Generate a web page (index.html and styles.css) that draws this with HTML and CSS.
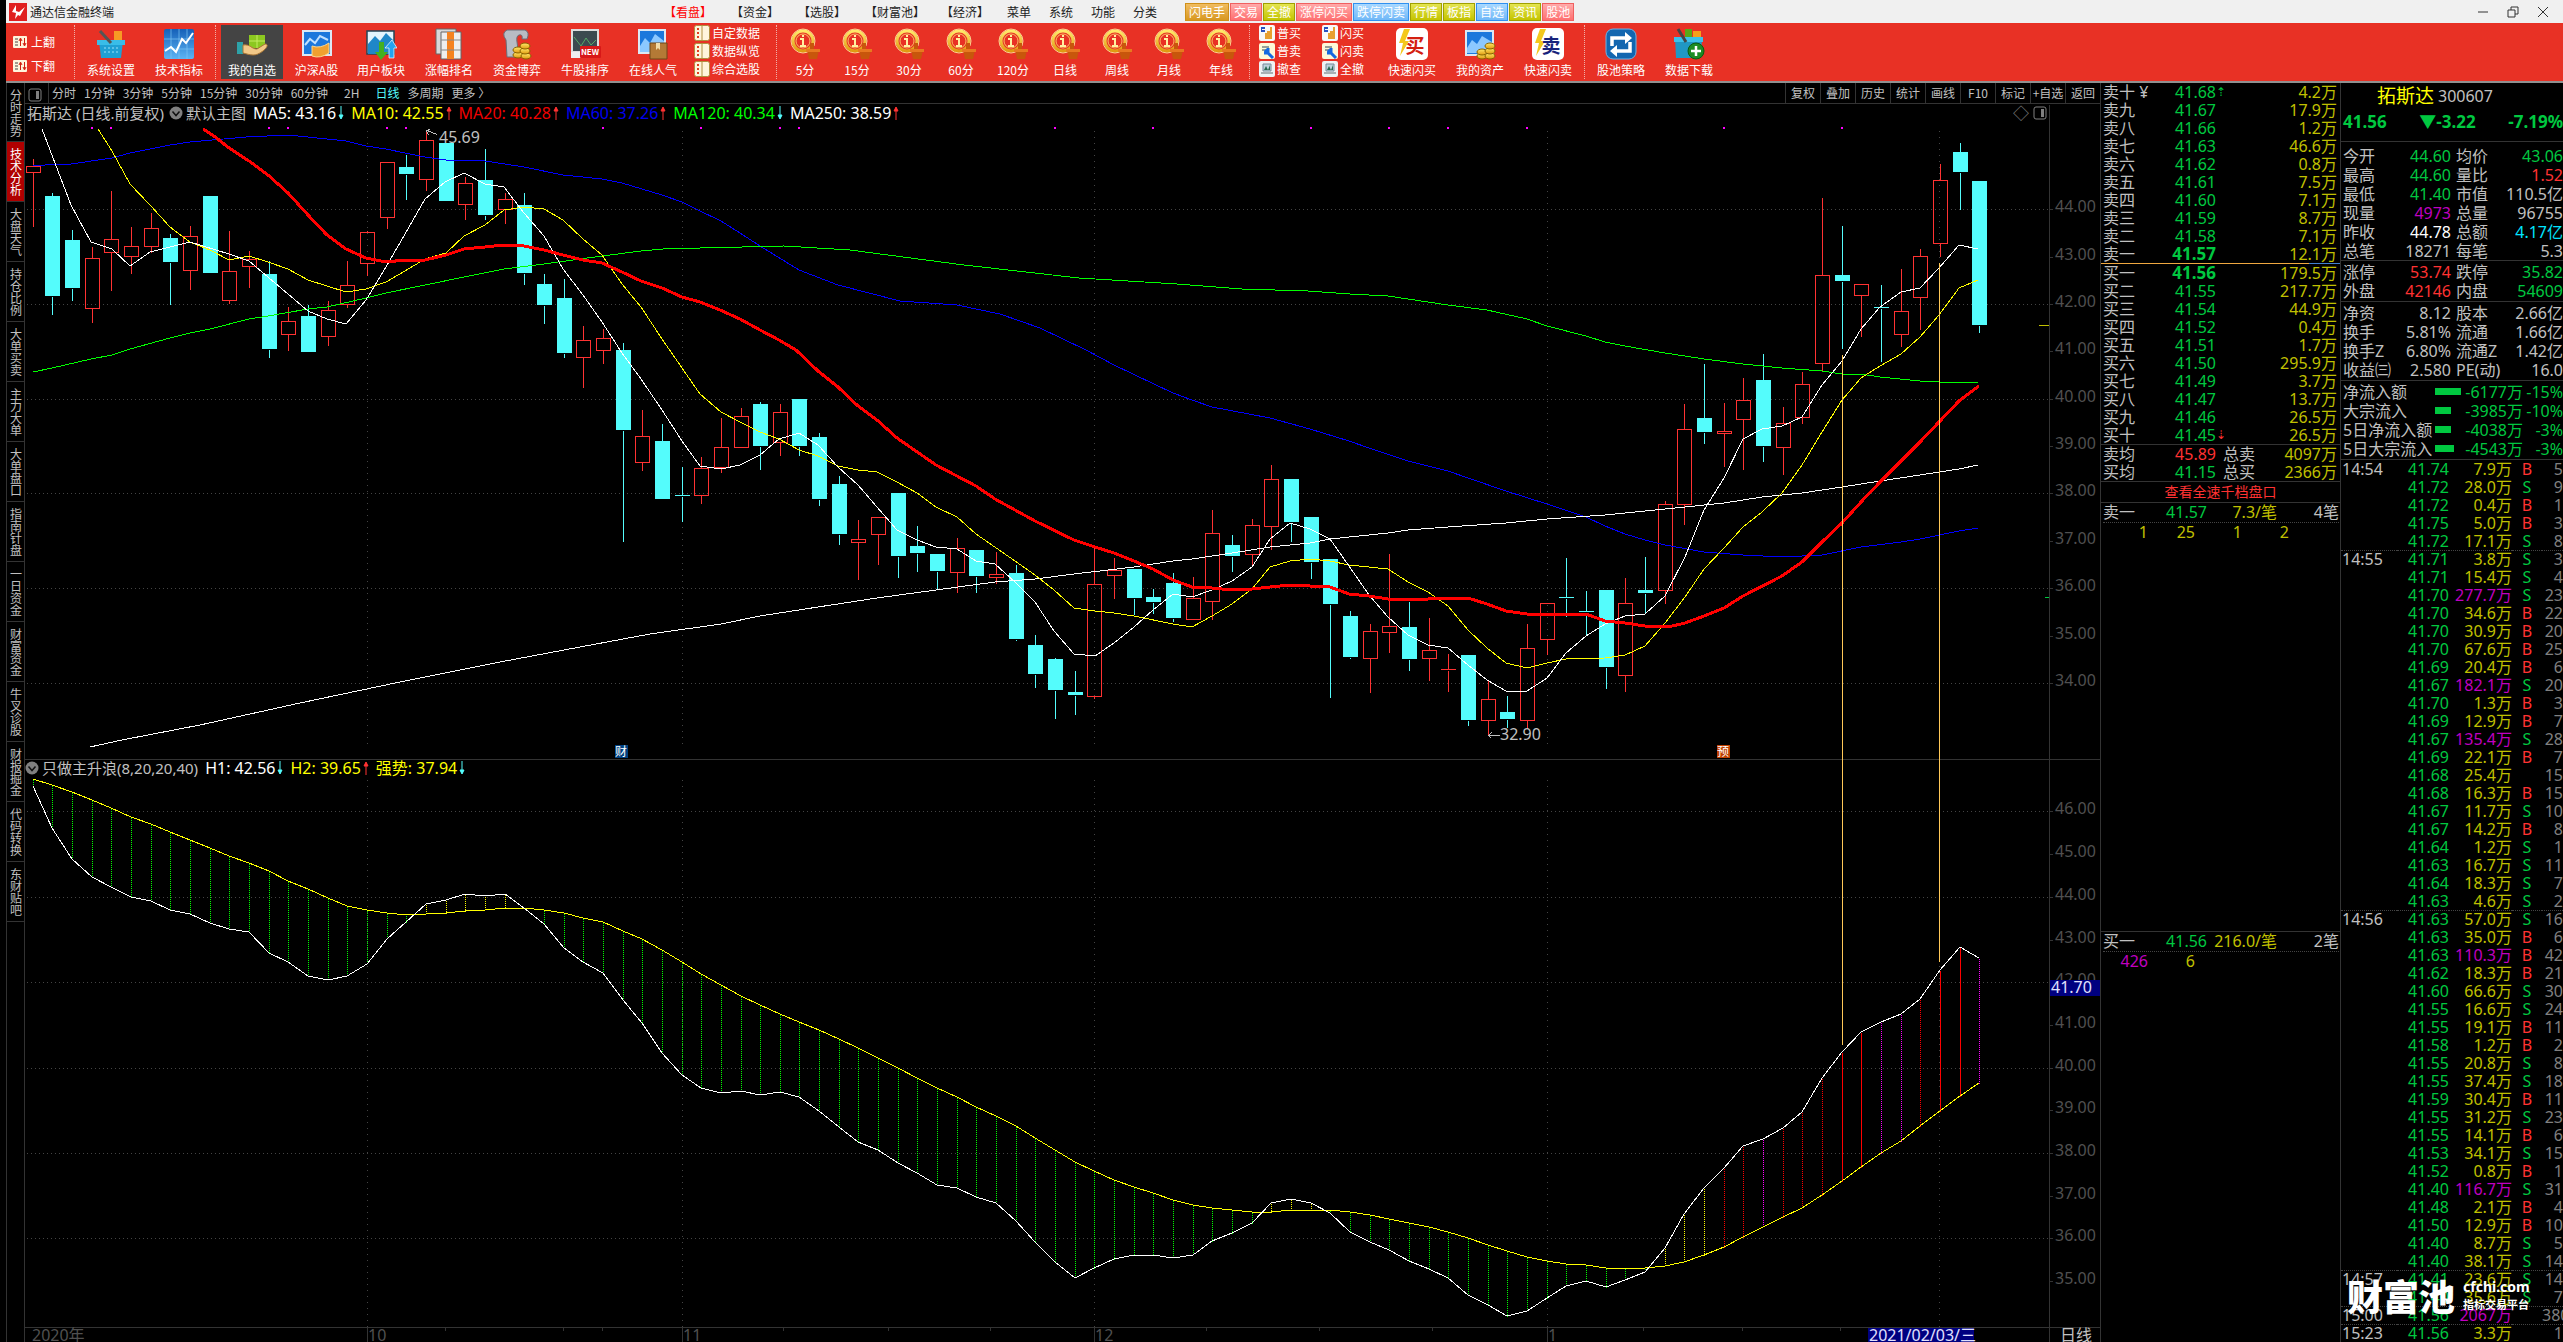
FILE: index.html
```html
<!DOCTYPE html>
<html lang="zh-CN">
<head>
<meta charset="utf-8">
<title>通达信金融终端</title>
<link rel="stylesheet" href="styles.css">
</head>
<body>
<svg class="sprite" aria-hidden="true">
  <linearGradient id="blue" x1="0" y1="0" x2="0" y2="1"><stop offset="0" stop-color="#1560b8"/><stop offset="1" stop-color="#5cb4f4"/></linearGradient>
  <linearGradient id="gold" x1="0" y1="0" x2="0" y2="1"><stop offset="0" stop-color="#ffe96a"/><stop offset="1" stop-color="#e09a10"/></linearGradient>
  <symbol id="i-logo" viewBox="0 0 18 18"><rect width="18" height="18" fill="#e02020"/><path d="M7 2 3 9l4 1-1 6 3-4 2 1 5-9-6 5-3-1z" fill="#fff"/></symbol>
  <symbol id="i-box" viewBox="0 0 32 32"><path d="M4 13h24l-2 17H6z" fill="#1fa0d4"/><path d="M2 12h28v5H2z" fill="#39bde8"/><path d="m5 3 11 12" stroke="#555" stroke-width="3"/><rect x="19" y="3" width="8" height="9" fill="#f79a24"/><path d="M9 20h14M9 24h14" stroke="#9be2fa" stroke-dasharray="2 2"/></symbol>
  <symbol id="i-chart" viewBox="0 0 32 32"><rect x="1" y="1" width="30" height="30" rx="2" fill="url(#blue)"/><path d="M8 1v30M16 1v30M24 1v30M1 11h30M1 21h30" stroke="#7cc4f4" stroke-width=".7"/><path d="m2 23 6-4 5 5 6-13 4 4 7-10" fill="none" stroke="#fff" stroke-width="2"/></symbol>
  <symbol id="i-hand" viewBox="0 0 32 32"><rect x="13" y="7" width="16" height="13" fill="#8cc820"/><path d="M21 7v13M13 13h16" stroke="#c4ec60"/><path d="M1 14h6v12H1z" fill="#2da2a8"/><path d="M7 17c8-1 8 4 14 4l8-5c4 0 2 4-2 7-8 6-12 4-20 2z" fill="#f2c888" stroke="#a87434"/></symbol>
  <symbol id="i-stock" viewBox="0 0 32 32"><rect x="2" y="3" width="28" height="24" fill="#1c78dc" stroke="#dce8f4" stroke-width="2"/><path d="m4 17 5-6 5 4 5-7 8 4" stroke="#bfe0ff" stroke-width="2" fill="none"/><path d="M11 18q8 3 17-3v10q-9 6-17 3z" fill="#f0a030" stroke="#fbd890"/></symbol>
  <symbol id="i-plate" viewBox="0 0 32 32"><rect x="2" y="3" width="27" height="23" fill="#e2f3fc" stroke="#245" stroke-width="1.5"/><path d="m3 16 7-8 5 5 6-8 8 8v13H3z" fill="#1f87c8"/><path d="M14 14h5v10h4l-7 8-6-8h4z" fill="#43b020"/><path d="M24 30V20h-4l7-8 5 8h-3v10z" fill="#24a4f0" stroke="#fff" stroke-width=".7"/></symbol>
  <symbol id="i-rank" viewBox="0 0 32 32"><path d="M3 1h20v25H3z" fill="#d8d8d8" stroke="#666"/><path d="M8 4h20v27H8z" fill="#eee" stroke="#666"/><path d="M14 4h7v27h-7z" fill="#f58220"/><path d="M8 12h20M8 22h20" stroke="#888"/></symbol>
  <symbol id="i-fund" viewBox="0 0 32 32"><path d="M6 2h18q5 2 2 9h-5q1-5-3-4-3 1-2 7l2 15H6l-1-17Q0 5 6 2z" fill="#b8bcc4" stroke="#6a6e78"/><g fill="url(#gold)" stroke="#8a6400"><ellipse cx="17" cy="27" rx="5" ry="3"/><ellipse cx="17" cy="22" rx="5" ry="3"/><ellipse cx="25" cy="28" rx="5" ry="3"/><ellipse cx="24" cy="23" rx="5" ry="3"/><ellipse cx="24" cy="18" rx="5" ry="3"/></g></symbol>
  <symbol id="i-hot" viewBox="0 0 32 32"><rect x="2" y="2" width="26" height="23" fill="#1c78dc" stroke="#dce8f4" stroke-width="2"/><path d="m3 18 5-8 5 5 5-9 9 7v11H3z" fill="#8cc8ff"/><path d="M13 15h17v16H13z" fill="#b47a36" stroke="#6e4617"/><path d="M19 15h4v7l-2-2-2 2z" fill="#f2dca8"/></symbol>
  <symbol id="i-coin" viewBox="0 0 32 32"><circle cx="14" cy="13" r="10" fill="#e83125" stroke="url(#gold)" stroke-width="3"/><circle cx="14" cy="13" r="12" fill="none" stroke="#fff3a8" stroke-width=".8"/><circle cx="14" cy="13" r="7" fill="none" stroke="#ffe070" stroke-width=".8"/><path d="M11 11h3v7M11 18h6" stroke="#fff0a0" stroke-width="2" fill="none"/><path d="M13 7h2v2h-2z" fill="#fff0a0"/><path d="M21 15h4v7h5l-2 9h-8l-2-9h3z" fill="#c8560c"/><path d="M17 21h14v3H17z" fill="#e87820"/></symbol>
  <symbol id="i-asset" viewBox="0 0 32 32"><rect x="2" y="3" width="27" height="24" fill="#1c78dc" stroke="#dce8f4" stroke-width="2"/><path d="m3 20 5-8 5 4 5-8 10 6v11H3z" fill="#8cc8ff"/><g fill="url(#gold)" stroke="#8a6400"><ellipse cx="18" cy="28" rx="5" ry="3"/><ellipse cx="18" cy="24" rx="5" ry="3"/><ellipse cx="26" cy="28" rx="5" ry="3"/><ellipse cx="26" cy="23" rx="5" ry="3"/><ellipse cx="26" cy="18" rx="5" ry="3"/></g></symbol>
  <symbol id="i-loop" viewBox="0 0 32 32"><rect x="1" y="1" width="30" height="30" rx="7" fill="#1266b0" stroke="#6ab4e8"/><path d="M7 18v-8h14M25 14v9H11" fill="none" stroke="#fff" stroke-width="3.500"/><path d="m20 4 7 6-7 6zM12 17l-7 6 7 6z" fill="#fff"/></symbol>
  <symbol id="i-down" viewBox="0 0 32 32"><rect x="12" y="1" width="7" height="9" fill="#58a818"/><rect x="20" y="3" width="8" height="8" fill="#f5a01c"/><path d="M2 10h27l-1 20H3z" fill="#2097c4"/><path d="M1 9h29v5H1z" fill="#3cc0ea"/><path d="m5 1 8 13" stroke="#444" stroke-width="3"/><circle cx="23" cy="23" r="8" fill="#1c8c24" stroke="#0a5c12"/><path d="M23 18v10M18 23h10" stroke="#fff" stroke-width="2.500"/></symbol>
  <symbol id="i-list" viewBox="0 0 16 16"><rect x=".5" y=".5" width="15" height="15" rx="2" fill="#fff5dc" stroke="#b09040"/><path d="M8 1v14" stroke="#b09040"/><path d="M3 3h2v2H3zM3 7h2v2H3zM3 11h2v2H3z" fill="#e04020"/></symbol>
  <symbol id="i-thumb" viewBox="0 0 16 16"><rect width="16" height="16" rx="2" fill="#f8f8f8"/><path d="M2 2h4v2H3v1h3v2H2z" fill="#2850c0"/><path d="M6 14V8h2V6h3V2h2v12z" fill="#e8a030"/></symbol>
  <symbol id="i-tool" viewBox="0 0 16 16"><rect width="16" height="16" rx="2" fill="#fdf8d8"/><path d="M3 4h7M3 7h5" stroke="#345"/><path d="m6 7 8 8M9 5v5H5" stroke="#1468e0" stroke-width="3" fill="none"/></symbol>
  <symbol id="i-pc" viewBox="0 0 16 16"><rect width="16" height="16" rx="2" fill="#eef2f4"/><path d="M4 3h8v7H4z" fill="#bcd4dc" stroke="#789"/><path d="m5 9 2-4 2 4 2-5v5z" fill="#286850"/><path d="M2 11h12v2H2z" fill="#a8b0b4"/></symbol>
  <symbol id="i-page" viewBox="0 0 14 12"><rect width="14" height="12" rx="1" fill="#fff5dc"/><path d="M2 3h3M2 6h3M2 9h3" stroke="#444"/><path d="M7.500 10V3M6 5l1.500-3L9 5M11.500 2v7M10 7l1.500 3L13 7" stroke="#d02010" fill="none"/></symbol>
  <symbol id="i-panel" viewBox="0 0 14 14"><rect x="1" y="1" width="12" height="12" rx="2" fill="none" stroke="#808080"/><path d="M8 3h3v8H8z" fill="#808080"/></symbol>
  <symbol id="i-fold" viewBox="0 0 14 14"><circle cx="7" cy="7" r="6.500" fill="#808080"/><path d="m3.500 5.500 3.500 4 3.500-4" fill="none" stroke="#111" stroke-width="1.500"/></symbol>
  <symbol id="i-up" viewBox="0 0 6 14"><path d="M3 14V2M1 5l2-4 2 4z" stroke="#ff3232" fill="#ff3232"/></symbol>
  <symbol id="i-dn" viewBox="0 0 6 14"><path d="M3 0v12M1 9l2 4 2-4z" stroke="#54fcfc" fill="#54fcfc"/></symbol>
</svg>

<header class="titlebar">
  <svg class="logo"><use href="#i-logo"/></svg>
  <h1 class="app-name">通达信金融终端</h1>
  <nav class="menu">
    <a class="menu-main is-on" href="#">【看盘】</a><a class="menu-main" href="#">【资金】</a><a class="menu-main" href="#">【选股】</a><a class="menu-main menu-wide" href="#">【财富池】</a><a class="menu-main menu-last" href="#">【经济】</a>
    <a class="menu-sub" href="#">菜单</a><a class="menu-sub" href="#">系统</a><a class="menu-sub" href="#">功能</a><a class="menu-sub" href="#">分类</a>
  </nav>
  <div class="quick">
    <button class="q-orange">闪电手</button><button class="q-pink">交易</button><button class="q-olive">全撤</button><button class="q-pink">涨停闪买</button><button class="q-blue">跌停闪卖</button><button class="q-olive">行情</button><button class="q-olive">板指</button><button class="q-blue">自选</button><button class="q-olive">资讯</button><button class="q-pink">股池</button>
  </div>
  <div class="window-controls">
    <button aria-label="最小化"><svg viewBox="0 0 12 12"><path d="M1 6h10"/></svg></button>
    <button aria-label="还原"><svg viewBox="0 0 12 12"><path d="M1 4h7v7H1zM4 4V1h7v7H8"/></svg></button>
    <button aria-label="关闭"><svg viewBox="0 0 12 12"><path d="m1 1 10 10M11 1 1 11"/></svg></button>
  </div>
</header>

<div class="toolbar">
  <div class="pager"><button><svg><use href="#i-page"/></svg>上翻</button><button><svg><use href="#i-page"/></svg>下翻</button></div>
  <div class="tool-group">
    <button class="tool"><svg><use href="#i-box"/></svg>系统设置</button>
    <button class="tool"><svg><use href="#i-chart"/></svg>技术指标</button>
  </div>
  <div class="tool-group">
    <button class="tool is-on"><svg><use href="#i-hand"/></svg>我的自选</button>
    <button class="tool tool-narrow"><svg><use href="#i-stock"/></svg>沪深A股</button>
    <button class="tool"><svg><use href="#i-plate"/></svg>用户板块</button>
    <button class="tool"><svg><use href="#i-rank"/></svg>涨幅排名</button>
    <button class="tool"><svg><use href="#i-fund"/></svg>资金博弈</button>
    <button class="tool"><svg viewBox="0 0 32 32"><rect x="3" y="2" width="26" height="22" fill="#3c4a50" stroke="#ddd" stroke-width="2"/><path d="m5 9 7 9 5-8 5 7 5-5" stroke="#56a868" fill="none"/><path d="M2 24h12v6H2z" fill="#eee"/><rect x="11" y="18" width="21" height="12" rx="1" fill="#d81818"/><text x="21" y="27" text-anchor="middle" font-size="8" font-weight="700" fill="#fff">NEW</text></svg>牛股排序</button>
    <button class="tool"><svg><use href="#i-hot"/></svg>在线人气</button>
    <div class="mini mini-wide">
      <button><svg><use href="#i-list"/></svg>自定数据</button><button><svg><use href="#i-list"/></svg>数据纵览</button><button><svg><use href="#i-list"/></svg>综合选股</button>
    </div>
  </div>
  <div class="tool-group">
    <button class="tool tool-period"><svg><use href="#i-coin"/></svg>5分</button>
    <button class="tool tool-period"><svg><use href="#i-coin"/></svg>15分</button>
    <button class="tool tool-period"><svg><use href="#i-coin"/></svg>30分</button>
    <button class="tool tool-period"><svg><use href="#i-coin"/></svg>60分</button>
    <button class="tool tool-period"><svg><use href="#i-coin"/></svg>120分</button>
    <button class="tool tool-period"><svg><use href="#i-coin"/></svg>日线</button>
    <button class="tool tool-period"><svg><use href="#i-coin"/></svg>周线</button>
    <button class="tool tool-period"><svg><use href="#i-coin"/></svg>月线</button>
    <button class="tool tool-period"><svg><use href="#i-coin"/></svg>年线</button>
  </div>
  <div class="tool-group">
    <div class="mini"><button><svg><use href="#i-thumb"/></svg>普买</button><button><svg><use href="#i-tool"/></svg>普卖</button><button><svg><use href="#i-pc"/></svg>撤查</button></div>
    <div class="mini"><button><svg><use href="#i-thumb"/></svg>闪买</button><button><svg><use href="#i-tool"/></svg>闪卖</button><button><svg><use href="#i-pc"/></svg>全撤</button></div>
    <button class="tool"><svg viewBox="0 0 32 32"><rect width="32" height="32" rx="5" fill="#fff"/><path d="M8 1 3 15h4L4 28l9-15H9l5-12z" fill="#f4c81c"/><text x="19" y="25" text-anchor="middle" font-size="19" font-weight="700" fill="#d42010">买</text></svg>快速闪买</button>
    <button class="tool"><svg><use href="#i-asset"/></svg>我的资产</button>
    <button class="tool"><svg viewBox="0 0 32 32"><rect width="32" height="32" rx="5" fill="#fff"/><path d="M8 1 3 15h4L4 28l9-15H9l5-12z" fill="#f4c81c"/><text x="19" y="25" text-anchor="middle" font-size="19" font-weight="700" fill="#18247c">卖</text></svg>快速闪卖</button>
  </div>
  <div class="tool-group">
    <button class="tool"><svg><use href="#i-loop"/></svg>股池策略</button>
    <button class="tool"><svg><use href="#i-down"/></svg>数据下载</button>
  </div>
</div>

<main class="workspace">
  <nav class="side">
    <a href="#">分时走势</a><a href="#" class="is-on">技术分析</a><a href="#">大盘天气</a><a href="#">持仓比例</a><a href="#">大单买卖</a><a href="#">主力大单</a><a href="#">大单盘口</a><a href="#">指南针盘</a><a href="#">一日资金</a><a href="#">财富资金</a><a href="#">牛叉诊股</a><a href="#">财报掘金</a><a href="#">代码转换</a><a href="#">东财贴吧</a>
  </nav>

  <section class="charts">
    <div class="tabs">
      <button class="tab-panel" aria-label="面板"><svg><use href="#i-panel"/></svg></button>
      <div class="periods">
        <button>分时</button><button>1分钟</button><button>3分钟</button><button>5分钟</button><button>15分钟</button><button>30分钟</button><button>60分钟</button><button class="period-wide">2H</button><button class="is-on">日线</button><button>多周期</button><button>更多 〉</button>
      </div>
      <div class="actions">
        <button>复权</button><button>叠加</button><button>历史</button><button>统计</button><button>画线</button><button>F10</button><button>标记</button><button>+自选</button><button>返回</button>
      </div>
    </div>
    <div class="canvas">
      <div class="pane pane-main">
        <div class="legend">
          <span class="legend-name">拓斯达 (日线.前复权)</span><svg class="fold"><use href="#i-fold"/></svg><span class="legend-name">默认主图</span>
          <span class="ma c-white">MA5: 43.16<svg><use href="#i-dn"/></svg></span><span class="ma c-bright">MA10: 42.55<svg><use href="#i-up"/></svg></span><span class="ma c-ma20">MA20: 40.28<svg><use href="#i-up"/></svg></span><span class="ma c-ma60">MA60: 37.26<svg><use href="#i-up"/></svg></span><span class="ma c-ma120">MA120: 40.34<svg><use href="#i-dn"/></svg></span><span class="ma c-white">MA250: 38.59<svg><use href="#i-up"/></svg></span>
        </div>
        <div class="pane-tools"><span>◇</span><svg><use href="#i-panel"/></svg></div>
      </div>
      <div class="pane pane-sub">
        <div class="legend legend-sub">
          <svg class="fold"><use href="#i-fold"/></svg><span class="legend-name">只做主升浪(8,20,20,40)</span>
          <span class="ma c-white">H1: 42.56<svg><use href="#i-dn"/></svg></span><span class="ma c-bright">H2: 39.65<svg><use href="#i-up"/></svg></span><span class="ma c-bright">强势: 37.94<svg><use href="#i-dn"/></svg></span>
        </div>
      </div>
      <div class="date-row"></div>
      <svg class="plot" id="plot" role="img" aria-label="拓斯达日线"></svg>
    </div>
  </section>

  <section class="book">
    <table class="levels" id="asks"></table>
    <div class="ratio"></div>
    <table class="levels" id="bids"></table>
    <table class="averages">
      <tr><th>卖均</th><td class="c-red num">45.89</td><th>总卖</th><td class="c-vol">4097万</td></tr>
      <tr><th>买均</th><td class="c-green num">41.15</td><th>总买</th><td class="c-vol">2366万</td></tr>
    </table>
    <a class="full-depth" href="#">查看全速千档盘口</a>
    <div class="queue queue-sell">
      <div class="queue-head"><span>卖一</span><span class="c-green">41.57</span><span class="c-vol">7.3/笔</span><span>4笔</span></div>
      <div class="queue-items c-vol"><span>1</span><span>25</span><span>1</span><span>2</span></div>
    </div>
    <div class="queue queue-buy">
      <div class="queue-head"><span>买一</span><span class="c-green">41.56</span><span class="c-vol">216.0/笔</span><span>2笔</span></div>
      <div class="queue-items c-vol"><span class="c-big">426</span><span>6</span></div>
    </div>
  </section>

  <section class="quote">
    <div class="quote-head">
      <div class="quote-name"><h2>拓斯达</h2><span>300607</span></div>
      <div class="quote-price"><span>41.56</span><span>▼-3.22</span><span>-7.19%</span></div>
    </div>
    <table class="stats stats-day">
      <tr><th>今开</th><td class="c-green">44.60</td><th>均价</th><td class="c-green">43.06</td></tr>
      <tr><th>最高</th><td class="c-green">44.60</td><th>量比</th><td class="c-red">1.52</td></tr>
      <tr><th>最低</th><td class="c-green">41.40</td><th>市值</th><td>110.5亿</td></tr>
      <tr><th>现量</th><td class="c-big">4973</td><th>总量</th><td>96755</td></tr>
      <tr><th>昨收</th><td class="c-white">44.78</td><th>总额</th><td class="c-cyan">4.17亿</td></tr>
      <tr><th>总笔</th><td>18271</td><th>每笔</th><td>5.3</td></tr>
    </table>
    <table class="stats">
      <tr><th>涨停</th><td class="c-red">53.74</td><th>跌停</th><td class="c-green">35.82</td></tr>
      <tr><th>外盘</th><td class="c-red">42146</td><th>内盘</th><td class="c-green">54609</td></tr>
    </table>
    <table class="stats">
      <tr><th>净资</th><td>8.12</td><th>股本</th><td>2.66亿</td></tr>
      <tr><th>换手</th><td>5.81%</td><th>流通</th><td>1.66亿</td></tr>
      <tr><th>换手Z</th><td>6.80%</td><th>流通Z</th><td>1.42亿</td></tr>
      <tr><th>收益㈢</th><td>2.580</td><th>PE(动)</th><td>16.0</td></tr>
    </table>
    <table class="flows">
      <tr><th>净流入额</th><td><i style="width:26px"></i></td><td>-6177万</td><td>-15%</td></tr>
      <tr><th>大宗流入</th><td><i style="width:16px"></i></td><td>-3985万</td><td>-10%</td></tr>
      <tr><th>5日净流入额</th><td><i style="width:16px"></i></td><td>-4038万</td><td>-3%</td></tr>
      <tr><th>5日大宗流入</th><td><i style="width:19px"></i></td><td>-4543万</td><td>-3%</td></tr>
    </table>
    <table class="ticks" id="ticks"></table>
    <div class="brand"><strong>财富池</strong><div><b>cfchi.com</b><em>指标交易平台</em></div></div>
  </section>
</main>
<script src="chart.js"></script>
</body>
</html>
```
FILE: styles.css
```css
* { box-sizing: border-box; }
html, body { margin: 0; height: 100%; }
body {
  display: flex;
  flex-direction: column;
  height: 100vh;
  padding-left: 6px;
  overflow: hidden;
  background: #000;
  color: #c0c0c0;
  font: 16px/18px "Noto Sans", "Noto Sans CJK SC", sans-serif;
}
button { margin: 0; padding: 0; border: 0; background: none; color: inherit; font: inherit; white-space: nowrap; cursor: pointer; }
a { color: inherit; text-decoration: none; }
table { border-collapse: separate; border-spacing: 0; table-layout: fixed; width: 100%; }
th, td { padding: 0; font-weight: 400; text-align: right; white-space: nowrap; }
th { text-align: left; }
h1, h2 { margin: 0; font-weight: 400; }
.sprite { position: absolute; width: 0; height: 0; }

.c-green { color: #00c840; }
.c-red { color: #ff3232; }
.c-vol { color: #c0c000; }
.c-big { color: #c000c0; }
.c-white { color: #fff; }
.c-cyan { color: #00e4ff; }
.c-bright { color: #ff0; }
.c-ma20 { color: #f00000; }
.c-ma60 { color: #0000f0; }
.c-ma120 { color: #0f0; }

/* title bar */
.titlebar {
  flex: none;
  display: flex;
  align-items: center;
  height: 23px;
  padding: 0 14px 0 3px;
  background: #f0f0f0;
  color: #222;
  font: 12px/16px "Noto Sans CJK SC", sans-serif;
}
.logo { width: 18px; height: 18px; }
.app-name { width: 637px; padding-left: 3px; font-size: 12px; line-height: 16px; }
.menu { display: flex; width: 521px; }
.menu-main { width: 67px; white-space: nowrap; }
.menu-wide { width: 76px; }
.menu-last { width: 57px; }
.menu-main.is-on { color: #f00; }
.menu-sub { width: 42px; text-align: center; }
.quick { display: flex; gap: 1px; flex: 1; }
.quick button { height: 18px; padding: 0 3px; border: 1px solid; color: #fff; line-height: 16px; }
.quick .q-orange { border-color: #d09018; background: linear-gradient(#f0bc60, #d89820); }
.quick .q-pink { border-color: #f06060; background: linear-gradient(#ffaaaa, #ff7070); }
.quick .q-olive { border-color: #a0a000; background: linear-gradient(#e4e450, #c4c400); }
.quick .q-blue { border-color: #3090f0; background: linear-gradient(#a8d8ff, #70b8f8); }
.window-controls { display: flex; gap: 18px; }
.window-controls svg { display: block; width: 12px; height: 12px; fill: none; stroke: #333; }

/* toolbar */
.toolbar {
  flex: none;
  display: flex;
  height: 60px;
  padding-top: 2px;
  border-bottom: 2px solid #909090;
  background: #e83125;
  color: #fff;
  font: 12px/16px "Noto Sans CJK SC", sans-serif;
}
.pager { display: flex; flex-direction: column; gap: 8px; width: 68px; padding: 9px 0 0 7px; }
.pager button { display: flex; align-items: center; gap: 4px; }
.pager svg { width: 14px; height: 12px; }
.tool-group { display: flex; height: 54px; padding: 0 2px; border-left: 1px dotted #f0b0a8; }
.tool { display: flex; flex-direction: column; align-items: center; gap: 2px; width: 62px; margin: 0 3px; padding-top: 3px; }
.tool.is-on { background: #444; }
.tool svg { width: 32px; height: 32px; }
.tool-narrow { width: 55px; }
.tool-period { width: 52px; margin: 0; }
.mini { display: flex; flex-direction: column; gap: 2px; width: 63px; padding-left: 7px; }
.mini-wide { width: 87px; }
.mini button { display: flex; align-items: center; gap: 2px; }
.mini svg { width: 16px; height: 16px; }

.workspace { flex: 1; min-height: 0; display: flex; }

/* left strip of views */
.side { flex: none; width: 19px; border: solid #333; border-width: 0 1px; font: 12px/12px "Noto Sans CJK SC", sans-serif; }
.side a { display: block; height: 60px; padding: 6px 2px 0 3px; border-bottom: 1px solid #333; word-break: break-all; }
.side a:first-child { height: 59px; }
.side .is-on { background: #b00000; color: #fff; }

/* charts */
.charts { flex: 1; min-width: 0; display: flex; flex-direction: column; }
.tabs { flex: none; display: flex; height: 21px; border-bottom: 1px solid #333; font: 12px/20px "Noto Sans CJK SC", sans-serif; }
.tab-panel { width: 24px; padding: 3px 0 0 3px; border-right: 1px solid #333; }
.tab-panel svg { display: block; width: 14px; height: 14px; }
.periods { display: flex; flex: 1; gap: 8px; padding-left: 3px; }
.period-wide { padding: 0 8px; }
.periods .is-on { color: #54fcfc; }
.actions { display: flex; }
.actions button { width: 35px; border-left: 1px solid #333; }
.canvas { position: relative; flex: 1; display: flex; flex-direction: column; }
.pane { display: flex; justify-content: space-between; border-bottom: 1px solid #333; }
.pane-main { flex: 656; }
.pane-sub { flex: 568; }
.date-row { flex: none; height: 14px; }
.legend { display: flex; align-items: center; height: 18px; padding-left: 2px; }
.legend-name { font-size: 15px; white-space: nowrap; }
.fold { width: 14px; height: 14px; margin: 0 3px 0 5px; }
.legend-sub { height: 16px; }
.legend-sub .fold { margin-left: -2px; }
.ma { display: flex; align-items: center; margin-left: 7px; white-space: nowrap; }
.ma svg { width: 6px; height: 14px; margin-left: 2px; }
.pane-tools { display: flex; align-items: center; gap: 4px; height: 18px; padding-right: 53px; color: #808080; }
.pane-tools svg { width: 14px; height: 14px; }
.plot { position: absolute; inset: 0; width: 100%; height: 100%; pointer-events: none; }
.plot text { font-size: 16px; }
.plot .axis { fill: #505050; }
.plot .badge { font-size: 12px; fill: #fff; }
.plot .tip { fill: #c0c0c0; }
.plot .hot { fill: #e0e0ff; }

/* order book */
.book { flex: none; display: flex; flex-direction: column; width: 240px; border-left: 1px solid #333; }
.levels tr, .averages tr { height: 18px; }
.levels th:first-child { width: 64px; padding-left: 2px; }
.levels .price { width: 51px; }
.levels .best { font-size: 17px; font-weight: 700; }
.levels .mark { width: 8px; font-size: 12px; text-align: left; }
.levels td:last-child { padding-right: 3px; }
.ratio { flex: none; height: 1px; background: linear-gradient(90deg, #f0a840 87%, #4080d0 87%); }
.averages { border-top: 1px solid #333; }
.averages th { padding-left: 7px; }
.averages th:first-child { width: 64px; padding-left: 2px; }
.averages .num { width: 51px; }
.averages td:last-child { padding-right: 3px; }
.full-depth { display: block; border-top: 1px solid #333; color: #ff3232; font-size: 14px; line-height: 20px; text-align: center; }
.queue { border-top: 1px solid #333; }
.queue-sell { flex: 429; }
.queue-buy { flex: 410; }
.queue-head { display: grid; grid-template-columns: 50px 54px 70px 1fr; height: 20px; margin: 0 1px 0 2px; border-bottom: 1px dotted #444; text-align: right; }
.queue-head span:first-child { text-align: left; }
.queue-items { display: grid; grid-template-columns: repeat(4, 47px); text-align: right; }

/* quote panel */
.quote { flex: none; position: relative; display: flex; flex-direction: column; width: 223px; border-left: 1px solid #333; overflow: hidden; }
.quote-head { height: 61px; }
.quote-name { display: flex; gap: 4px; padding-left: 36px; line-height: 26px; }
.quote-name h2 { color: #ff0; font-size: 19px; line-height: 26px; }
.quote-price { display: flex; justify-content: space-between; padding-left: 2px; color: #00c840; font-size: 17px; font-weight: 700; line-height: 26px; }
.stats tr, .flows tr { height: 19px; }
.stats, .flows { padding: 1px 0; border-top: 1px solid #333; }
.stats-day { padding: 4px 0 0; }
.stats th:nth-child(1) { width: 54px; padding-left: 2px; }
.stats td:nth-child(2) { width: 56px; }
.stats th:nth-child(3) { padding-left: 5px; width: 53px; }
.flows { color: #00c840; }
.flows th { width: 94px; padding-left: 2px; color: #c0c0c0; }
.flows td:nth-child(2) { width: 26px; text-align: left; }
.flows td:nth-child(3) { width: 62px; }
.flows i { display: block; height: 7px; background: #00c840; }
.ticks { border-top: 1px solid #333; }
.ticks tr { height: 18px; }
.ticks .minute > * { border-top: 1px dotted #444; line-height: 17px; }
.ticks th { width: 56px; padding-left: 1px; }
.ticks .price { width: 52px; }
.ticks .volume { width: 63px; }
.ticks .side-cell { width: 30px; text-align: center; }
.ticks .count { color: #808080; }
.brand { position: absolute; bottom: 28px; left: 6px; display: flex; align-items: center; gap: 8px; color: #fff; }
.brand strong { font: 900 36px/38px "Noto Sans CJK SC", sans-serif; }
.brand div { display: flex; flex-direction: column; }
.brand b { font-size: 14px; line-height: 18px; }
.brand em { font: 700 11px/16px "Noto Sans CJK SC", sans-serif; }
```
FILE: chart.js
```js
// Chart data is kept in design units; draw() scales it to the canvas size.
const ORIGIN = { x: 25, y: 104 };
const SIZE = { w: 2075, h: 1238 };
const STEP = 19.664;
const FIRST = 32.6;

// r = rising (hollow), c = falling (solid): high, body top, body bottom, low
const candles = `r158,166,172,226 c192,196,296,314 c229,240,288,300 r246,258,308,322 r190,239,252,290 r226,246,256,273 r212,228,246,252 c233,238,262,304 r225,236,270,289 c196,196,273,273
r230,271,300,303 r250,259,266,287 c260,274,349,357 r306,321,334,350 c304,316,352,352 r300,310,336,345 r260,285,304,307 r230,232,263,275 r162,162,217,228 c154,167,174,199
r130,140,179,190 c143,143,201,201 r176,183,204,219 c148,180,215,219 r192,199,209,223 c192,205,273,284 c273,284,305,323 c278,298,353,357 r325,340,357,387 r328,338,350,363
c342,350,430,541 r409,436,462,470 c423,441,499,499 c466,495,496,521 r456,468,495,503 r417,447,467,472 r407,416,447,447 c401,404,446,469 r403,412,442,455 c398,399,446,455
c432,437,499,505 c475,484,534,544 r519,539,542,579 r517,517,534,564 c493,493,556,577 c525,546,553,571 c553,554,571,588 r537,548,572,592 c550,550,576,592 r551,574,577,583
c564,573,639,640 c634,645,674,687 c657,659,690,718 c670,692,695,714 r547,584,696,698 r557,570,575,598 c569,569,598,614 c588,597,602,613 c572,583,618,621 r576,598,619,619
r509,533,601,619 c534,545,556,571 r518,525,554,564 r464,479,526,549 c479,479,522,541 c517,517,562,578 c559,559,604,697 c610,616,657,658 r623,631,658,692 r553,626,632,652
c601,627,659,670 r617,650,658,680 r653,669,670,691 c655,655,720,725 r680,699,720,734 c695,712,719,727 r623,648,720,728 r603,603,639,654 c557,597,598,616 c590,611,612,635
c590,590,667,688 r577,603,675,691 c556,590,593,613 r500,504,590,603 r403,429,504,524 c363,418,432,443 r402,431,433,466 r377,400,419,469 c353,380,446,461 r406,423,447,474
r371,384,417,423 r197,275,363,371 c225,275,281,348 r283,284,295,336 c284,307,308,361 r268,311,334,346 r248,256,297,329 r163,180,243,256 c142,152,172,209 c181,181,325,332`
  .split(/\s+/).map(s => [s[0], ...s.slice(1).split(',').map(Number)]);

const averages = [
  ['#0000ff', 1, '33,166 45,165 71,164 112,158 130,153 170,145 190,142 246,137 288,135 327,139 346,141 366,146 386,149 405,153 425,157 446,160 464,160 485,161 524,167 563,175 602,179 622,183 662,195 682,202 700,211 721,221 740,233 760,246 799,270 838,285 900,301 957,305 1000,314 1040,328 1086,350 1114,365 1173,393 1192,400 1212,407 1270,418 1310,429 1349,441 1369,448 1408,461 1448,471 1468,478 1506,491 1547,504 1586,517 1605,526 1625,534 1645,540 1665,545 1704,552 1743,555 1782,557 1802,556 1822,555 1861,547 1901,542 1920,539 1959,531 1978,528'],
  ['#00ff00', 1, '33,372 52,368 91,359 112,355 130,349 170,338 190,333 210,329 249,319 268,316 308,309 327,307 366,298 386,293 425,285 464,277 504,269 544,264 602,256 641,251 674,248 700,248 784,246 850,250 964,265 1079,278 1177,284 1242,289 1308,291 1350,294 1388,296 1408,299 1448,305 1487,310 1527,319 1547,326 1586,336 1605,342 1625,346 1665,353 1704,359 1743,364 1782,368 1822,371 1842,374 1861,374 1880,377 1920,381 1939,382 1959,382 1978,383'],
  ['#ffffff', 1, '90,747 122,740 200,725 300,703 400,682 500,662 580,647 650,634 721,624 760,616 818,607 877,598 936,590 995,582 1035,579 1074,574 1134,567 1173,561 1192,559 1232,553 1270,547 1310,543 1330,539 1388,533 1408,530 1448,527 1506,523 1547,519 1605,515 1645,511 1685,507 1724,503 1762,497 1802,493 1842,487 1880,481 1920,475 1939,472 1959,469 1978,465'],
  ['#ffff00', 1, '98,129 112,151 130,184 150,205 170,227 190,242 210,250 229,260 249,256 268,262 288,269 308,280 327,286 346,292 366,289 386,282 405,271 425,259 446,253 464,236 485,225 504,210 524,207 544,209 563,220 583,239 602,255 622,284 641,307 662,339 682,368 700,394 721,412 740,422 760,432 779,439 799,450 818,456 838,466 858,470 877,472 897,482 917,493 936,507 957,517 976,534 1015,561 1035,575 1054,590 1074,608 1095,611 1114,613 1134,616 1173,624 1192,627 1212,616 1232,604 1252,589 1270,567 1290,561 1310,559 1330,561 1349,565 1388,569 1408,582 1428,592 1448,606 1468,630 1487,648 1506,663 1527,668 1547,663 1566,659 1605,658 1625,655 1645,646 1665,623 1685,597 1704,569 1724,548 1743,527 1762,512 1782,493 1802,465 1822,432 1842,400 1861,378 1880,366 1901,354 1920,337 1939,315 1959,288 1978,280'],
  ['#ffffff', 1, '42,129 71,205 91,242 112,249 130,266 150,252 170,247 190,242 229,254 249,261 288,294 308,311 327,319 346,324 366,300 386,267 405,234 425,199 445,182 464,173 485,184 504,187 524,213 544,236 563,269 583,295 602,322 622,353 641,379 662,410 682,441 700,466 721,469 740,465 760,455 779,439 799,433 818,445 838,467 858,485 877,507 897,530 917,540 936,547 957,549 976,561 995,564 1015,582 1035,602 1054,631 1074,654 1095,656 1114,643 1134,627 1153,610 1173,594 1192,597 1212,590 1232,581 1252,567 1270,539 1290,523 1310,529 1330,539 1349,566 1369,595 1388,617 1408,635 1428,645 1448,648 1468,665 1487,680 1506,691 1527,691 1547,678 1566,653 1586,636 1605,624 1625,616 1645,614 1665,596 1685,557 1704,510 1724,478 1743,439 1762,429 1782,426 1802,417 1822,385 1842,361 1861,329 1880,307 1901,292 1920,288 1939,268 1959,245 1978,249'],
  ['#ff0000', 3, '203,129 214,136 229,148 249,161 268,175 288,193 308,215 327,235 346,249 366,258 386,262 405,260 425,260 446,255 464,249 485,247 504,245 524,246 544,250 563,255 583,260 602,263 622,272 641,281 662,288 682,297 700,302 720,310 740,319 760,330 779,340 796,350 818,371 838,387 858,406 877,420 897,438 936,465 976,486 995,499 1035,521 1074,540 1095,547 1114,553 1134,561 1153,569 1173,580 1192,587 1212,588 1232,590 1252,589 1270,587 1290,585 1310,586 1330,587 1349,594 1369,596 1388,599 1428,599 1448,598 1468,598 1487,604 1506,611 1527,614 1586,614 1605,621 1625,623 1645,626 1668,627 1685,623 1704,616 1724,608 1743,596 1782,576 1802,562 1822,542 1842,523 1861,502 1880,482 1920,442 1959,401 1979,386']
];

const slow = [779,785,792,800,808,817,824,832,840,848,856,863,871,881,889,898,906,910,913,915,914,913,911,910,908,908,910,913,918,922,931,939,950,962,974,985,996,1005,1014,1022,1030,1039,1048,1058,1068,1078,1088,1097,1107,1116,1126,1138,1150,1162,1171,1180,1187,1193,1200,1205,1208,1210,1212,1212,1210,1210,1210,1212,1215,1219,1223,1227,1232,1238,1245,1251,1257,1261,1264,1265,1268,1268,1268,1266,1262,1255,1247,1237,1227,1217,1208,1195,1181,1167,1153,1141,1126,1111,1096,1083];
const fast = [786,828,859,877,887,897,901,910,914,923,929,932,953,962,976,980,976,964,939,922,904,900,894,896,894,908,924,948,962,973,1000,1023,1053,1075,1088,1093,1091,1095,1092,1097,1111,1127,1142,1150,1163,1173,1185,1188,1197,1203,1221,1242,1262,1278,1268,1259,1255,1255,1258,1255,1241,1233,1223,1203,1199,1203,1213,1232,1242,1250,1261,1269,1278,1295,1305,1316,1311,1298,1286,1281,1287,1280,1272,1248,1214,1188,1168,1146,1139,1128,1112,1078,1052,1032,1022,1014,999,970,947,958];
const signals = [3, 4, 12, 13, 18, 19, 29, 34, 38, 39, 52, 57, 65, 69, 72, 76, 86, 92];
const magentaSticks = [88, 94, 95, 99];
const solidSticks = [92, 93, 97, 98];
const months = [[367, '10'], [682, '11'], [1094, '12'], [1547, '1'], [1939, '']];

function draw() {
  const svg = document.getElementById('plot');
  const box = svg.getBoundingClientRect();
  const X = v => Math.round((v - ORIGIN.x) * box.width / SIZE.w);
  const Y = v => Math.round((v - ORIGIN.y) * box.height / SIZE.h);
  const at = i => FIRST + STEP * i;
  const out = [];
  const line = (x1, y1, x2, y2, color, dash = '') =>
    out.push(`<path d="M${X(x1) + .5} ${Y(y1) + .5}L${X(x2) + .5} ${Y(y2) + .5}" stroke="${color}" stroke-dasharray="${dash}"/>`);
  const text = (x, y, value, cls) => out.push(`<text x="${X(x)}" y="${Y(y)}" class="${cls}">${value}</text>`);
  const block = (x, y, w, h, color) => out.push(`<rect x="${X(x)}" y="${Y(y)}" width="${w}" height="${h}" fill="${color}"/>`);
  const curve = (points, color, width) => out.push(
    `<polyline points="${points.map(([x, y]) => X(x) + ',' + Y(y)).join(' ')}" fill="none" stroke="${color}" stroke-width="${width}"/>`);

  out.push('<g shape-rendering="crispEdges">');
  line(2049, 104, 2049, 1341, '#333');
  for (let price = 44; price >= 34; price--) {
    const y = 209.3 + (44 - price) * 47.36;
    if (price % 2 === 0) line(26, y, 2048, y, '#444', '1 3');
    line(2049, y, 2052, y, '#333');
    text(2055, y + 3, price + '.00', 'axis');
  }
  for (let price = 46; price >= 35; price--) {
    const y = 811.4 + (46 - price) * 42.7;
    if (price % 2 === 0) line(26, y, 2048, y, '#444', '1 3');
    line(2049, y, 2052, y, '#333');
    text(2055, y + 3, price + '.00', 'axis');
  }
  for (const [x, label] of months) {
    line(x, 130, x, 745, '#444', '1 5');
    line(x, 779, x, 1326, '#444', '1 5');
    line(x, 1327, x, 1341, '#333');
    if (label) text(x + 1, 1341, label, 'axis');
  }
  for (const x of [445, 563, 602, 783, 888, 990, 1206, 1319, 1432, 1643, 1742, 1840]) line(x, 1327, x, 1330, '#333');
  text(32, 1341, '2020年', 'axis');
  text(2060, 1341, '日线', 'tip');
  block(1868, 1328, 106, 14, '#000080');
  text(1869, 1341, '2021/02/03/三', 'hot');
  block(2050, 980, 50, 16, '#000080');
  text(2051, 993, '41.70', 'hot');

  candles.forEach(([kind, high, top, bottom, low], i) => {
    const x = at(i), color = kind === 'r' ? '#ff3232' : '#54fcfc';
    line(x, high, x, top, color);
    line(x, bottom, x, low, color);
    const height = Y(bottom) - Y(top);
    if (kind === 'c' || height < 2) block(x - 7, top, 15, Math.max(height, 1), color);
    else out.push(`<rect x="${X(x - 7) + .5}" y="${Y(top) + .5}" width="14" height="${height}" fill="none" stroke="${color}"/>`);
  });
  averages.forEach(([color, width, path]) => curve(path.split(' ').map(p => p.split(',').map(Number)), color, width));
  signals.forEach(i => block(at(i) - 1, 127, 2, 2, '#ff00ff'));

  slow.forEach((y, i) => {
    let color = fast[i] > y ? '#00ff00' : i < 86 ? '#ffff00' : '#ff0000';
    if (magentaSticks.includes(i)) color = '#ff00ff';
    line(at(i), Math.min(y, fast[i]), at(i), Math.max(y, fast[i]), color, solidSticks.includes(i) ? '' : '1 1');
  });
  curve(slow.map((y, i) => [at(i), y]), '#ffff00', 1);
  curve(fast.map((y, i) => [at(i), y]), '#ffffff', 1);
  line(1842, 354, 1842, 1044, '#ffc858');
  line(1939, 262, 1939, 961, '#ffc858');
  line(2038, 325, 2048, 325, '#c0c000');
  line(2044, 597, 2048, 597, '#00c840');
  line(426, 130, 437, 134, '#c0c0c0');
  line(426, 130, 430, 129, '#c0c0c0');
  line(426, 130, 428, 135, '#c0c0c0');
  line(1488, 735, 1499, 735, '#c0c0c0');
  line(1488, 735, 1491, 732, '#c0c0c0');
  line(1488, 735, 1491, 738, '#c0c0c0');
  out.push('</g>');
  text(439, 143, '45.69', 'tip');
  text(1500, 740, '32.90', 'tip');
  block(615, 745, 13, 13, '#004080');
  text(615, 756, '财', 'badge');
  block(1717, 745, 13, 13, '#c04000');
  text(1717, 756, '预', 'badge');
  svg.innerHTML = out.join('');
}

const asks = [['十', '41.68', '4.2'], ['九', '41.67', '17.9'], ['八', '41.66', '1.2'], ['七', '41.63', '46.6'], ['六', '41.62', '0.8'], ['五', '41.61', '7.5'], ['四', '41.60', '7.1'], ['三', '41.59', '8.7'], ['二', '41.58', '7.1'], ['一', '41.57', '12.1']];
const bids = [['一', '41.56', '179.5'], ['二', '41.55', '217.7'], ['三', '41.54', '44.9'], ['四', '41.52', '0.4'], ['五', '41.51', '1.7'], ['六', '41.50', '295.9'], ['七', '41.49', '3.7'], ['八', '41.47', '13.7'], ['九', '41.46', '26.5'], ['十', '41.45', '26.5']];

function levels(id, side, rows, mark) {
  document.getElementById(id).innerHTML = rows.map(([n, price, volume]) => `<tr>
    <th>${side}${n}${side === '卖' && n === '十' ? ' ¥' : ''}</th>
    <td class="price c-green ${n === '一' ? 'best' : ''}">${price}</td>
    <td class="mark">${n === '十' ? mark : ''}</td>
    <td class="c-vol">${volume}万</td></tr>`).join('');
}

const trades = `14:54 41.74 7.9 B 5|- 41.72 28.0 S 9|- 41.72 0.4 B 1|- 41.75 5.0 B 3|- 41.72 17.1 S 8|14:55 41.71 3.8 S 3|- 41.71 15.4 S 4|- 41.70 277.7 S 23|- 41.70 34.6 B 22|- 41.70 30.9 B 20|- 41.70 67.6 B 25|- 41.69 20.4 B 6|- 41.67 182.1 S 20|- 41.70 1.3 B 3|- 41.69 12.9 B 7|- 41.67 135.4 S 28|- 41.69 22.1 B 7|- 41.68 25.4 - 15|- 41.68 16.3 B 15|- 41.67 11.7 S 10|- 41.67 14.2 B 8|- 41.64 1.2 S 1|- 41.63 16.7 S 11|- 41.64 18.3 S 7|- 41.63 4.6 S 2|14:56 41.63 57.0 S 16|- 41.63 35.0 B 6|- 41.63 110.3 B 42|- 41.62 18.3 B 21|- 41.60 66.6 S 30|- 41.55 16.6 S 24|- 41.55 19.1 B 11|- 41.58 1.2 B 2|- 41.55 20.8 S 8|- 41.55 37.4 S 18|- 41.59 30.4 B 11|- 41.55 31.2 S 23|- 41.55 14.1 B 6|- 41.53 34.1 S 15|- 41.52 0.8 B 1|- 41.40 116.7 S 31|- 41.48 2.1 B 4|- 41.50 12.9 B 10|- 41.40 8.7 S 5|- 41.40 38.1 S 14|14:57 41.41 23.6 S 14|- 41.40 35.6 S 7|15:00 41.56 2067 - 380|15:23 41.56 3.3 - 1`;

document.getElementById('ticks').innerHTML = trades.split('|').map((row, i) => {
  const [time, price, volume, side, count] = row.split(' ').map(v => v === '-' ? '' : v);
  return `<tr class="${time && i ? 'minute' : ''}"><th>${time}</th><td class="price c-green">${price}</td>
    <td class="volume ${volume > 100 ? 'c-big' : 'c-vol'}">${volume}万</td>
    <td class="side-cell ${side === 'B' ? 'c-red' : 'c-green'}">${side}</td><td class="count">${count}</td></tr>`;
}).join('');

levels('asks', '卖', asks, '<span class="c-green">⇡</span>');
levels('bids', '买', bids, '<span class="c-red">⇣</span>');
draw();
addEventListener('resize', draw);
```
